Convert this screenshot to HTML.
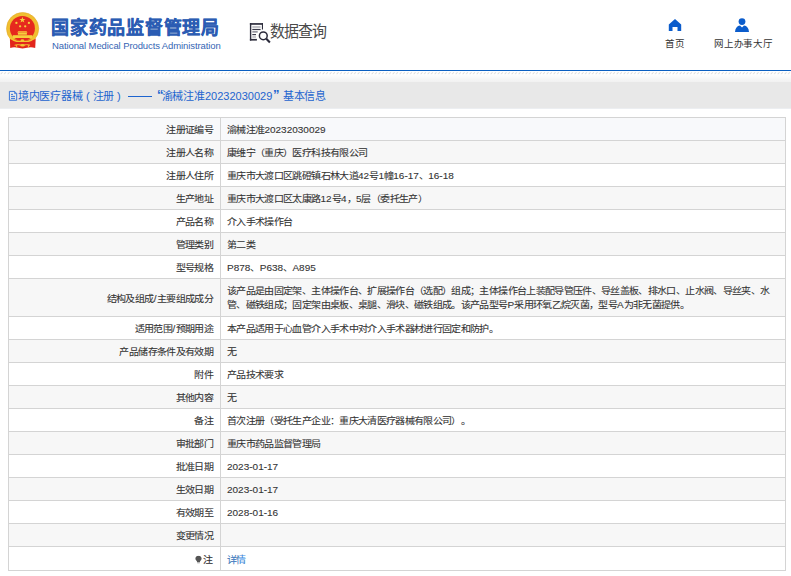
<!DOCTYPE html>
<html lang="zh-CN">
<head>
<meta charset="utf-8">
<style>
html,body{margin:0;padding:0;}
body{width:791px;height:576px;overflow:hidden;position:relative;background:#fff;text-spacing-trim:space-all;font-family:"Liberation Sans",sans-serif;color:#333;}
.a{position:absolute;white-space:nowrap;}
#bl{left:0;top:70px;width:791px;height:1px;background:#0b5fc1;}
#grad{left:0;top:75px;width:791px;height:7px;background:linear-gradient(#fdfdfd,#f1f1f1);}
#band{left:0;top:82px;width:791px;height:26px;background:#e8e8e8;border-bottom:1px solid #eceef1}
.ttl{top:88px;font-size:11px;line-height:16px;color:#1d64cf;letter-spacing:-0.3px}
.hl{left:8px;width:778px;height:1px;background:#d4d4d4;}
.vl0{top:117px;width:1px;height:454px;background:#d4d4d4;}
.lbl{right:578px;font-size:10px;letter-spacing:-0.65px;color:#333;-webkit-text-stroke:0.1px #3a3a3a;transform:scaleY(0.9);text-align:right;}
.val{left:227px;font-size:10px;letter-spacing:-0.65px;color:#333;-webkit-text-stroke:0.1px #3a3a3a;transform:scaleY(0.9);}
.lk{color:#3d8fe8}
.ln{letter-spacing:0}
.sl{letter-spacing:0.4px;margin-left:0.3px}
.pin{display:inline-block;vertical-align:-1px;margin-right:1px}
</style>
</head>
<body>
<!-- header -->
<svg class="a" style="left:0;top:0" width="46" height="55" viewBox="0 0 46 55">
  <defs><clipPath id="ct"><rect x="0" y="0" width="46" height="39.6"/></clipPath></defs>
  <path d="M9.9 38.4 L35.7 38.4 L35.2 48 Q31 46.6 28.5 47.6 L22.5 48.4 L16.5 47.6 Q14 46.6 10.2 48 Z" fill="#e2261c"/>
  <g clip-path="url(#ct)"><circle cx="22.6" cy="28.6" r="16.1" fill="#f0bf30" stroke="#e4a828" stroke-width="0.6"/></g>
  <circle cx="22.4" cy="28.4" r="12.5" fill="#e6291e"/>
  <path d="M9.3 36.5 Q13.5 42.3 22.5 41.3 Q31.5 42.3 35.7 36.5" fill="none" stroke="#f2c631" stroke-width="1.3"/>
  <ellipse cx="22.4" cy="40.4" rx="1.9" ry="1.1" fill="#f2c631"/>
  <ellipse cx="22.55" cy="45.3" rx="2.3" ry="1.3" fill="#f2c631"/>
  <path d="M14.6 45.2 Q18 44 22.5 45.3 Q27 44 30.1 45.2" fill="none" stroke="#f2c631" stroke-width="1"/>
  <path d="M16.3 45 L16.9 47.6 M28.8 45 L28.2 47.6" fill="none" stroke="#f2c631" stroke-width="0.9"/>
  <g fill="#f6d03c">
    <path d="M22.4 16.7 L23.15 18.95 L25.5 18.95 L23.6 20.35 L24.3 22.6 L22.4 21.2 L20.5 22.6 L21.2 20.35 L19.3 18.95 L21.65 18.95Z"/>
    <circle cx="16.4" cy="22.9" r="1.15"/>
    <circle cx="28.9" cy="22.9" r="1.15"/>
    <circle cx="20.1" cy="26.3" r="1.15"/>
    <circle cx="25.2" cy="26.3" r="1.15"/>
    <path d="M18.3 31.3 H26.5 L27.5 32.6 H17.2Z"/>
    <rect x="17.9" y="32.6" width="9" height="2.1"/>
    <rect x="12.9" y="35.2" width="19.3" height="2.8"/>
  </g>
</svg>
<div class="a" id="logo" style="left:51px;top:15.5px;font-size:18px;line-height:24px;font-weight:bold;color:#2b5cb3;letter-spacing:0.75px;-webkit-text-stroke:0.3px #2b5cb3">国家药品监督管理局</div>
<div class="a" id="eng" style="left:52px;top:39.6px;font-size:9.5px;line-height:12px;color:#3565b4;letter-spacing:-0.1px">National Medical Products Administration</div>

<svg class="a" style="left:246px;top:19px" width="28" height="28" viewBox="0 0 28 28">
  <rect x="3.9" y="4.1" width="13.1" height="1.7" fill="#2d2d3d"/>
  <rect x="3.9" y="4.1" width="1.4" height="17.5" fill="#2d2d3d"/>
  <rect x="15.9" y="4.1" width="1.1" height="6.4" fill="#2d2d3d"/>
  <rect x="3.9" y="19.9" width="7" height="1.7" fill="#2d2d3d"/>
  <rect x="6.3" y="7.4" width="8.3" height="1.2" fill="#9a9aa4"/>
  <rect x="6.3" y="9.9" width="8.3" height="1.2" fill="#3a3a4a"/>
  <rect x="6.3" y="12.3" width="5.4" height="1.2" fill="#6a6a78"/>
  <rect x="6.3" y="15.0" width="3.7" height="1.2" fill="#3a3a4a"/>
  <rect x="6.3" y="17.4" width="3.7" height="1.2" fill="#a8a8b0"/>
  <circle cx="17.3" cy="16.8" r="3.9" fill="none" stroke="#2a2a3a" stroke-width="1.5"/>
  <path d="M20.3 19.8L23.9 23.4" stroke="#2a2a3a" stroke-width="2.1"/>
</svg>
<div class="a" id="sjcx" style="left:270px;top:20px;font-size:15px;line-height:22px;color:#4a4a4a;letter-spacing:-1.1px;transform:scaleY(1.08);transform-origin:0 0">数据查询</div>

<svg class="a" style="left:668px;top:18px" width="14" height="14" viewBox="0 0 14 14">
  <path d="M7 1L13.2 6.5V13H9.5V9H4.5V13H0.8V6.5Z" fill="#0b5ccb"/>
</svg>
<div class="a" style="left:665px;top:37px;font-size:9.5px;line-height:14px;color:#333">首页</div>
<svg class="a" style="left:734px;top:17px" width="16" height="16" viewBox="0 0 16 16">
  <circle cx="8" cy="4.6" r="3.4" fill="#0b5ccb"/>
  <path d="M1 15 Q1.5 9 6 8.5 L8 10.5 L10 8.5 Q14.5 9 15 15Z" fill="#0b5ccb"/>
</svg>
<div class="a" style="left:714px;top:37px;font-size:9.5px;line-height:14px;color:#333;letter-spacing:-0.2px">网上办事大厅</div>

<div class="a" id="bl"></div>
<svg class="a" style="left:0;top:71px" width="791" height="4"><defs><pattern id="hp" width="3.5" height="4" patternUnits="userSpaceOnUse"><path d="M0.6 3.2L2.4 1.2" stroke="#d6d6d6" stroke-width="0.9"/></pattern></defs><rect width="791" height="4" fill="url(#hp)"/></svg>
<div class="a" id="grad"></div>
<div class="a" id="band"></div>
<svg class="a" style="left:5px;top:87px" width="16" height="18" viewBox="0 0 16 18"><g fill="none" stroke="#2f6fd6" stroke-width="0.95"><path d="M4.4 4.4H9.6L11.7 6.5V13.25H4.4Z"/><path d="M9.6 4.4V6.6H11.7" stroke-width="0.8"/><path d="M6 7.4H8M6 9.4H10M6 11.4H10"/></g></svg>
<div class="a ttl" style="left:18px">境内医疗器械</div>
<div class="a ttl" style="left:86px">(</div>
<div class="a ttl" style="left:92.5px">注册</div>
<div class="a ttl" style="left:117px">)</div>
<div class="a" style="left:128px;top:96px;width:24px;height:1px;background:#1d64cf"></div>
<div class="a ttl" style="left:157px;font-size:13px;top:87px;font-weight:bold">&#8220;</div>
<div class="a ttl" style="left:161.5px">渝械注准</div>
<div class="a ttl" style="left:205px;letter-spacing:0">20232030029</div>
<div class="a ttl" style="left:273px;font-size:13px;top:87px;font-weight:bold">&#8221;</div>
<div class="a ttl" style="left:283px">基本信息</div>

<!--TBL-->
<div class="a" style="left:9px;top:118px;width:776px;height:22px;background:#f8f9fb"></div>
<div class="a" style="left:9px;top:141px;width:776px;height:22px;background:#f7f7f7"></div>
<div class="a" style="left:9px;top:164px;width:776px;height:22px;background:#ffffff"></div>
<div class="a" style="left:9px;top:187px;width:776px;height:22px;background:#f7f7f7"></div>
<div class="a" style="left:9px;top:210px;width:776px;height:22px;background:#ffffff"></div>
<div class="a" style="left:9px;top:233px;width:776px;height:22px;background:#f7f7f7"></div>
<div class="a" style="left:9px;top:256px;width:776px;height:22px;background:#ffffff"></div>
<div class="a" style="left:9px;top:279px;width:776px;height:37px;background:#f7f7f7"></div>
<div class="a" style="left:9px;top:317px;width:776px;height:22px;background:#ffffff"></div>
<div class="a" style="left:9px;top:340px;width:776px;height:22px;background:#f7f7f7"></div>
<div class="a" style="left:9px;top:363px;width:776px;height:22px;background:#ffffff"></div>
<div class="a" style="left:9px;top:386px;width:776px;height:22px;background:#f7f7f7"></div>
<div class="a" style="left:9px;top:409px;width:776px;height:22px;background:#ffffff"></div>
<div class="a" style="left:9px;top:432px;width:776px;height:22px;background:#f7f7f7"></div>
<div class="a" style="left:9px;top:455px;width:776px;height:22px;background:#ffffff"></div>
<div class="a" style="left:9px;top:478px;width:776px;height:22px;background:#f7f7f7"></div>
<div class="a" style="left:9px;top:501px;width:776px;height:22px;background:#ffffff"></div>
<div class="a" style="left:9px;top:524px;width:776px;height:22px;background:#f7f7f7"></div>
<div class="a" style="left:9px;top:547px;width:776px;height:23px;background:#ffffff"></div>
<div class="a hl" style="top:117px"></div>
<div class="a hl" style="top:140px"></div>
<div class="a hl" style="top:163px"></div>
<div class="a hl" style="top:186px"></div>
<div class="a hl" style="top:209px"></div>
<div class="a hl" style="top:232px"></div>
<div class="a hl" style="top:255px"></div>
<div class="a hl" style="top:278px"></div>
<div class="a hl" style="top:316px"></div>
<div class="a hl" style="top:339px"></div>
<div class="a hl" style="top:362px"></div>
<div class="a hl" style="top:385px"></div>
<div class="a hl" style="top:408px"></div>
<div class="a hl" style="top:431px"></div>
<div class="a hl" style="top:454px"></div>
<div class="a hl" style="top:477px"></div>
<div class="a hl" style="top:500px"></div>
<div class="a hl" style="top:523px"></div>
<div class="a hl" style="top:546px"></div>
<div class="a hl" style="top:570px"></div>
<div class="a vl0" style="left:8px"></div><div class="a vl0" style="left:785px"></div><div class="a vl0" style="left:220px"></div>
<div class="a lbl" style="top:119px;line-height:22px">注册证编号</div>
<div class="a val" style="top:119px;line-height:22px">渝械注准<span class="ln">20232030029</span></div>
<div class="a lbl" style="top:142px;line-height:22px">注册人名称</div>
<div class="a val" style="top:142px;line-height:22px">康维宁（重庆）医疗科技有限公司</div>
<div class="a lbl" style="top:165px;line-height:22px">注册人住所</div>
<div class="a val" style="top:165px;line-height:22px">重庆市大渡口区跳磴镇石林大道<span class="ln">42</span>号<span class="ln">1</span>幢<span class="ln">16-17</span>、<span class="ln">16-18</span></div>
<div class="a lbl" style="top:188px;line-height:22px">生产地址</div>
<div class="a val" style="top:188px;line-height:22px">重庆市大渡口区太康路<span class="ln">12</span>号<span class="ln">4</span>，<span class="ln">5</span>层（委托生产）</div>
<div class="a lbl" style="top:211px;line-height:22px">产品名称</div>
<div class="a val" style="top:211px;line-height:22px">介入手术操作台</div>
<div class="a lbl" style="top:234px;line-height:22px">管理类别</div>
<div class="a val" style="top:234px;line-height:22px">第二类</div>
<div class="a lbl" style="top:257px;line-height:22px">型号规格</div>
<div class="a val" style="top:257px;line-height:22px"><span class="ln">P878</span>、<span class="ln">P638</span>、<span class="ln">A895</span></div>
<div class="a lbl" style="top:280px;line-height:37px">结构及组成<span class="sl">/</span>主要组成成分</div>
<div class="a val" style="top:283px;line-height:15.2px">该产品是由固定架、主体操作台、扩展操作台（选配）组成；主体操作台上装配导管压件、导丝盖板、排水口、止水阀、导丝夹、水<br>管、磁铁组成；固定架由桌板、桌腿、滑块、磁铁组成。该产品型号<span class="ln">P</span>采用环氧乙烷灭菌，型号<span class="ln">A</span>为非无菌提供。</div>
<div class="a lbl" style="top:318px;line-height:22px">适用范围<span class="sl">/</span>预期用途</div>
<div class="a val" style="top:318px;line-height:22px">本产品适用于心血管介入手术中对介入手术器材进行固定和防护。</div>
<div class="a lbl" style="top:341px;line-height:22px">产品储存条件及有效期</div>
<div class="a val" style="top:341px;line-height:22px">无</div>
<div class="a lbl" style="top:364px;line-height:22px">附件</div>
<div class="a val" style="top:364px;line-height:22px">产品技术要求</div>
<div class="a lbl" style="top:387px;line-height:22px">其他内容</div>
<div class="a val" style="top:387px;line-height:22px">无</div>
<div class="a lbl" style="top:410px;line-height:22px">备注</div>
<div class="a val" style="top:410px;line-height:22px">首次注册（受托生产企业：重庆大清医疗器械有限公司）。</div>
<div class="a lbl" style="top:433px;line-height:22px">审批部门</div>
<div class="a val" style="top:433px;line-height:22px">重庆市药品监督管理局</div>
<div class="a lbl" style="top:456px;line-height:22px">批准日期</div>
<div class="a val" style="top:456px;line-height:22px"><span class="ln">2023-01-17</span></div>
<div class="a lbl" style="top:479px;line-height:22px">生效日期</div>
<div class="a val" style="top:479px;line-height:22px"><span class="ln">2023-01-17</span></div>
<div class="a lbl" style="top:502px;line-height:22px">有效期至</div>
<div class="a val" style="top:502px;line-height:22px"><span class="ln">2028-01-16</span></div>
<div class="a lbl" style="top:525px;line-height:22px">变更情况</div>
<div class="a val" style="top:525px;line-height:22px"></div>
<div class="a lbl" style="top:548px;line-height:23px;right:579px"><svg class="pin" width="7" height="9" viewBox="0 0 7 9"><path d="M3.5 0.3C5.3 0.3 6.6 1.7 6.6 3.5C6.6 5 5.5 5.8 5 6.6V7.6H2V6.6C1.5 5.8 0.4 5 0.4 3.5C0.4 1.7 1.7 0.3 3.5 0.3Z" fill="#555"/><rect x="2.2" y="8" width="2.6" height="0.9" fill="#888"/></svg>注</div>
<div class="a val" style="top:548px;line-height:23px"><span class="lk">详情</span></div>
<!--/TBL-->
</body>
</html>
